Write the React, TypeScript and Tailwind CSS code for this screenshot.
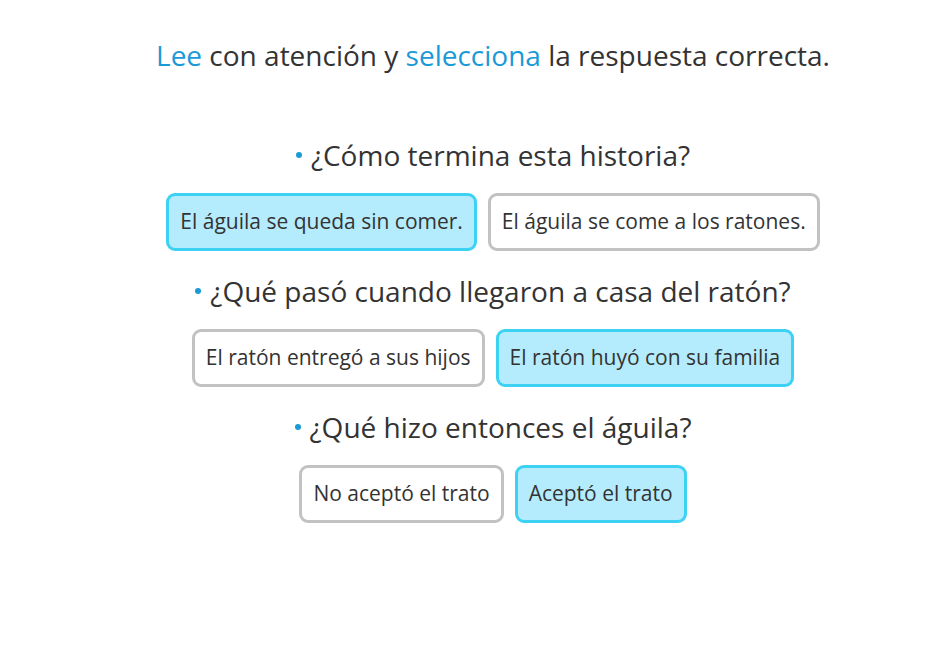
import { useState } from 'react';

type Question = {
  text: string;
  options: string[];
  selected: number;
};

const questions: Question[] = [
  {
    text: '¿Cómo termina esta historia?',
    options: ['El águila se queda sin comer.', 'El águila se come a los ratones.'],
    selected: 0,
  },
  {
    text: '¿Qué pasó cuando llegaron a casa del ratón?',
    options: ['El ratón entregó a sus hijos', 'El ratón huyó con su familia'],
    selected: 1,
  },
  {
    text: '¿Qué hizo entonces el águila?',
    options: ['No aceptó el trato', 'Aceptó el trato'],
    selected: 1,
  },
];

function QuestionBlock({ q }: { q: Question }) {
  const [selected, setSelected] = useState(q.selected);

  return (
    <div className="flex flex-col items-center">
      <div className="flex h-[40px] items-center gap-[9px] text-[28px] text-[#333]">
        <span className="h-[6px] w-[6px] rounded-full bg-[#1a9ad6]" />
        <span>{q.text}</span>
      </div>
      <div className="mt-[18px] flex gap-[11px]">
        {q.options.map((opt, i) => (
          <button
            key={opt}
            onClick={() => setSelected(i)}
            className={
              i === selected
                ? 'h-[58px] rounded-[9px] border-[3px] border-[#3dd2f3] bg-[#b5ecfd] px-[11px] text-[21px] text-[#333]'
                : 'h-[58px] rounded-[9px] border-[3px] border-[#c2c2c2] bg-white px-[11px] text-[21px] text-[#333]'
            }
          >
            {opt}
          </button>
        ))}
      </div>
    </div>
  );
}

export default function App() {
  return (
    <div className="min-h-screen bg-white pl-[41px] pt-[35px] font-['Open_Sans',sans-serif]">
      <div className="flex flex-col items-center">
        <h1 className="flex h-[40px] items-center text-[28px] font-normal text-[#333]">
          <span>
            <span className="text-[#1a9ad6]">Lee</span> con atención y{' '}
            <span className="text-[#1a9ad6]">selecciona</span> la respuesta correcta.
          </span>
        </h1>
        <div className="mt-[60px] flex flex-col gap-[20px]">
          {questions.map((q) => (
            <QuestionBlock key={q.text} q={q} />
          ))}
        </div>
      </div>
    </div>
  );
}
